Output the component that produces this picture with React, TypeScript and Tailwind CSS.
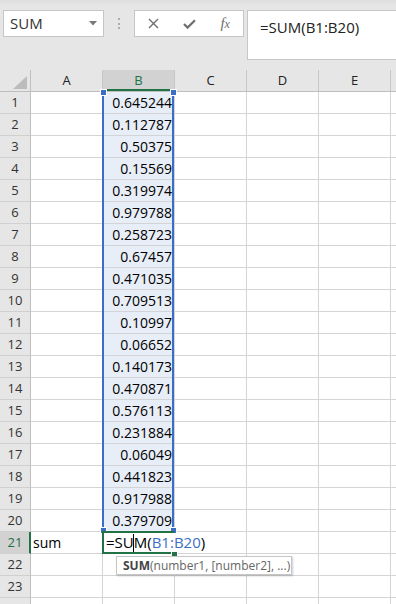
import React from "react";

const values = [
  "0.645244", "0.112787", "0.50375", "0.15569", "0.319974", "0.979788", "0.258723",
  "0.67457", "0.471035", "0.709513", "0.10997", "0.06652", "0.140173", "0.470871",
  "0.576113", "0.231884", "0.06049", "0.441823", "0.917988", "0.379709",
];

const cols = ["A", "B", "C", "D", "E"];

function Handle({ className }: { className: string }) {
  return <div className={"absolute w-[5px] h-[5px] bg-[#3c6ec8] border border-white box-content " + className} />;
}

export default function App() {
  const rows = Array.from({ length: 24 }, (_, i) => i + 1);
  return (
    <div className="relative w-[396px] h-[604px] overflow-hidden bg-[#e6e6e6] font-['Open_Sans',sans-serif]">
      {/* toolbar */}
      <div className="h-[70px] bg-gradient-to-b from-[#dedede] to-[#e6e6e6] to-[6px] flex items-start pt-[10px] pl-[3px]">
        <div className="w-[101px] h-[27px] bg-white border border-[#c6c6c6] flex items-center justify-between pl-[6px] pr-[6px]">
          <span className="text-[15px] text-[#333] leading-none">SUM</span>
          <svg width="8" height="5" viewBox="0 0 8 5">
            <path d="M0 0 L8 0 L4 4.5 Z" fill="#7a7a7a" />
          </svg>
        </div>
        <div className="w-[30px] h-[27px] flex flex-col items-center justify-center gap-[2.5px]">
          <div className="w-[2px] h-[2px] bg-[#ababab]" />
          <div className="w-[2px] h-[2px] bg-[#ababab]" />
          <div className="w-[2px] h-[2px] bg-[#ababab]" />
        </div>
        <div className="w-[110px] h-[27px] bg-white border border-[#c6c6c6] flex items-center pl-[1px]">
          <div className="w-[36px] flex justify-center">
            <svg width="11" height="11" viewBox="0 0 11 11">
              <path d="M1 1 L10 10 M10 1 L1 10" stroke="#6e6e6e" strokeWidth="1.4" />
            </svg>
          </div>
          <div className="w-[36px] flex justify-center">
            <svg width="13" height="10" viewBox="0 0 13 10">
              <path d="M1 5 L4.6 8.6 L12 1.2" stroke="#6e6e6e" strokeWidth="2.2" fill="none" />
            </svg>
          </div>
          <div className="w-[36px] flex justify-center">
            <span className="font-['Liberation_Serif',serif] italic text-[15px] text-[#6e6e6e] leading-none">
              f<span className="text-[12px]">x</span>
            </span>
          </div>
        </div>
        <div className="ml-[3px] flex-1 h-[50px] bg-white border-y border-l border-[#c6c6c6] pl-[12px] pt-[4px]">
          <span className="text-[15px] text-[#222] leading-[20px]">=SUM(B1:B20)</span>
        </div>
      </div>

      {/* grid */}
      <div className="relative">
        {/* header */}
        <div className="flex h-[22px] border-b border-[#bfbfbf]">
          <div className="w-[31px] shrink-0 border-r border-[#bfbfbf] relative">
            <svg className="absolute left-[13px] top-[6px]" width="14" height="13" viewBox="0 0 14 13">
              <path d="M14 0 L14 13 L0 13 Z" fill="#bcbcbc" />
            </svg>
          </div>
          {cols.map((c) => (
            <div
              key={c}
              className={
                "w-[72px] shrink-0 border-r border-[#c6c6c6] flex items-center justify-center text-[13px] " +
                (c === "B" ? "bg-[#d2d2d2] text-[#217346] shadow-[inset_0_-2px_0_#217346]" : "text-[#222]")
              }
            >
              {c}
            </div>
          ))}
          <div className="flex-1" />
        </div>
        {rows.map((r) => {
          const active = r === 21;
          return (
            <div key={r} className="flex h-[22px]">
              <div
                className={
                  "w-[31px] shrink-0 border-b border-[#d0d0d0] flex items-center justify-center text-[13px] " +
                  (active
                    ? "bg-[#d2d2d2] text-[#217346] border-r-2 border-r-[#217346] pl-[1px]"
                    : "bg-[#e6e6e6] text-[#333] border-r border-r-[#bfbfbf]")
                }
              >
                {r <= 23 ? r : ""}
              </div>
              <div className="w-[72px] shrink-0 bg-white border-r border-b border-[#d4d4d4] flex items-center pl-[2px] text-[14px] text-black">
                {r === 21 ? "sum" : ""}
              </div>
              <div
                className={
                  "w-[72px] shrink-0 border-r border-b border-[#d4d4d4] flex items-center justify-end pr-[2px] text-[14px] text-black whitespace-nowrap " +
                  (r <= 20 ? "bg-[#e8eef8]" : "bg-white")
                }
              >
                {r <= 20 ? values[r - 1] : ""}
              </div>
              <div className="w-[72px] shrink-0 bg-white border-r border-b border-[#d4d4d4]" />
              <div className="w-[72px] shrink-0 bg-white border-r border-b border-[#d4d4d4]" />
              <div className="w-[72px] shrink-0 bg-white border-r border-b border-[#d4d4d4]" />
              <div className="flex-1 bg-white border-b border-[#d4d4d4]" />
            </div>
          );
        })}

        {/* range selection B1:B20 */}
        <div className="absolute left-[102px] top-[22px] w-[72px] h-[440px] border-x-2 border-[#3c6ec8]" />
        <Handle className="left-[100px] top-[19px]" />
        <Handle className="left-[170px] top-[19px]" />
        <Handle className="left-[100px] top-[457px]" />
        <Handle className="left-[170px] top-[457px]" />

        {/* active cell B21 */}
        <div className="absolute left-[102px] top-[461px] w-[72px] h-[23px] border-2 border-[#217346]" />
        <div className="absolute left-[171px] top-[480px] w-[5px] h-[5px] bg-[#217346] border border-white box-content" />
        <div className="absolute left-[106px] top-[463px] h-[19px] pr-[1px] bg-white flex items-center whitespace-nowrap text-[15px] text-black">
          <span>=SU</span>
          <span className="relative">
            <span className="absolute left-[-0.5px] top-[-9px] w-[1px] h-[18px] bg-black" />
          </span>
          <span>M(</span>
          <span className="text-[#3c6ec8]">B1:B20</span>
          <span>)</span>
        </div>

        {/* tooltip */}
        <div className="absolute left-[116px] top-[486px] w-[176px] h-[19px] bg-white border border-[#c6c6c6] shadow-[1px_1px_2px_rgba(0,0,0,0.2)] flex items-center pl-[6px] text-[12px] whitespace-nowrap">
          <span className="font-bold text-[#444]">SUM</span>
          <span className="text-[#666]">(number1, [number2], ...)</span>
        </div>
      </div>
    </div>
  );
}
